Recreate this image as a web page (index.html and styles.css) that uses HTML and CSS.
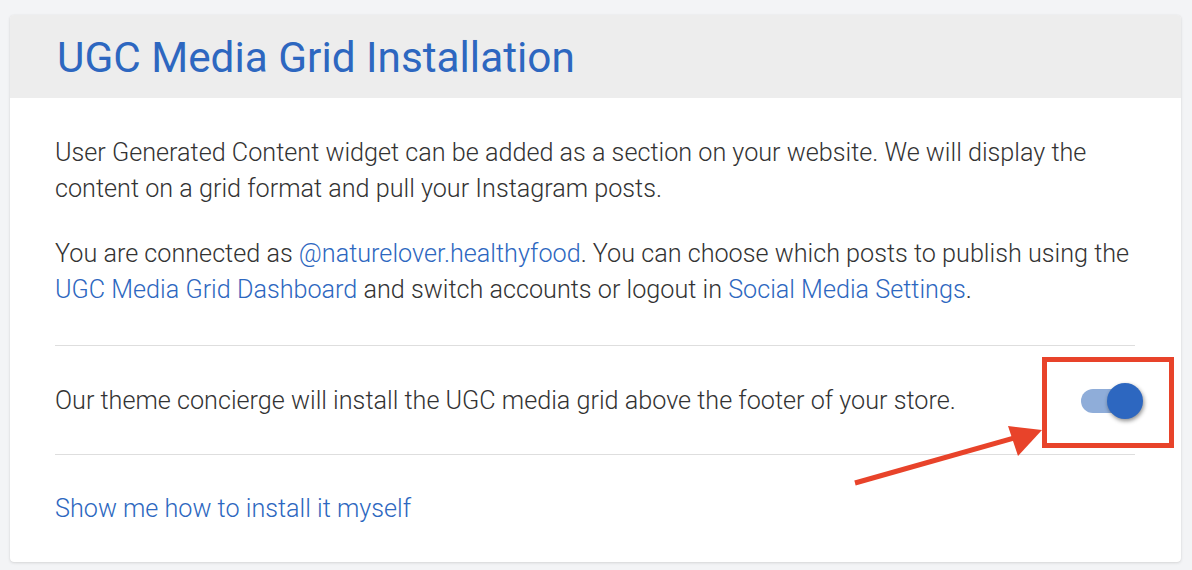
FILE: index.html
```html
<!DOCTYPE html>
<html>
<head>
<meta charset="utf-8">
<link rel="stylesheet" href="styles.css">
</head>
<body>
<div class="page">
  <div class="card">
    <div class="card-header">
      <h1 class="title">UGC Media Grid Installation</h1>
    </div>
    <div class="card-body">
      <div class="intro">
        <p>User Generated Content widget can be added as a section on your website. We will display the content on a grid format and pull your Instagram posts.</p>
        <p>You are connected as <a href="#">@naturelover.healthyfood</a>. You can choose which posts to publish using the <a href="#">UGC Media Grid Dashboard</a> and switch accounts or logout in <a href="#">Social Media Settings</a>.</p>
      </div>
      <div class="row">
        <span class="row-text">Our theme concierge will install the UGC media grid above the footer of your store.</span>
        <span class="toggle"><span class="toggle-track"></span><span class="toggle-knob"></span></span>
      </div>
      <div class="footer-link">
        <a href="#">Show me how to install it myself</a>
      </div>
    </div>
    <div class="highlight"></div>
    <svg class="arrow" width="200" height="70" viewBox="0 0 200 70">
      <line x1="5" y1="63" x2="168" y2="17" stroke="#e8432a" stroke-width="5"/>
      <polygon points="192,10 158,6 168,36" fill="#e8432a"/>
    </svg>
  </div>
</div>
</body>
</html>
```
FILE: styles.css
```css
html, body {
  margin: 0;
  padding: 0;
  background: #f3f4f6;
}
body {
  font-family: Roboto, "Liberation Sans", sans-serif;
  color: #333333;
}
.page {
  padding: 15px 11px 7px 10px;
}
.card {
  position: relative;
  background: #ffffff;
  border-radius: 4px;
  box-shadow: 0 1px 3px rgba(0,0,0,0.12), 0 0 1px rgba(0,0,0,0.1);
}
.card-header {
  background: #ededed;
  height: 83px;
  border-radius: 4px 4px 0 0;
  padding: 3px 47px 0;
  box-sizing: border-box;
  display: flex;
  align-items: center;
}
.title {
  margin: 0;
  font-weight: 400;
  font-size: 42.3px;
  color: #2d67c0;
  line-height: 48px;
}
.card-body {
  padding: 0 46px 0 45px;
}
.intro {
  padding: 37px 0 37px;
  border-bottom: 1px solid #dedede;
}
.intro p {
  margin: 0;
  font-size: 25.2px;
  font-weight: 300;
  line-height: 36px;
}
.intro p + p {
  margin-top: 29px;
}
a {
  color: #2d67c0;
  text-decoration: none;
}
.row {
  display: flex;
  align-items: center;
  justify-content: space-between;
  padding: 37px 0 35px;
  border-bottom: 1px solid #dedede;
  font-size: 25.2px;
  font-weight: 300;
  line-height: 36px;
}
.toggle {
  position: relative;
  width: 62px;
  height: 36px;
  margin-right: -8px;
  flex: none;
}
.toggle-track {
  position: absolute;
  left: 0;
  top: 6px;
  width: 50px;
  height: 24px;
  border-radius: 12px;
  background: #8fadd9;
}
.toggle-knob {
  position: absolute;
  right: 0;
  top: 0;
  width: 36px;
  height: 36px;
  border-radius: 50%;
  background: #2d67c0;
  box-shadow: 1px 2px 4px rgba(0,0,0,0.45);
}
.footer-link {
  padding: 36px 0 35px;
  font-size: 25.2px;
  font-weight: 300;
  line-height: 36px;
}
.highlight {
  position: absolute;
  left: 1032px;
  top: 342px;
  width: 122px;
  height: 81px;
  border: 5px solid #e8432a;
}
.arrow {
  position: absolute;
  left: 840px;
  top: 405px;
}
```
